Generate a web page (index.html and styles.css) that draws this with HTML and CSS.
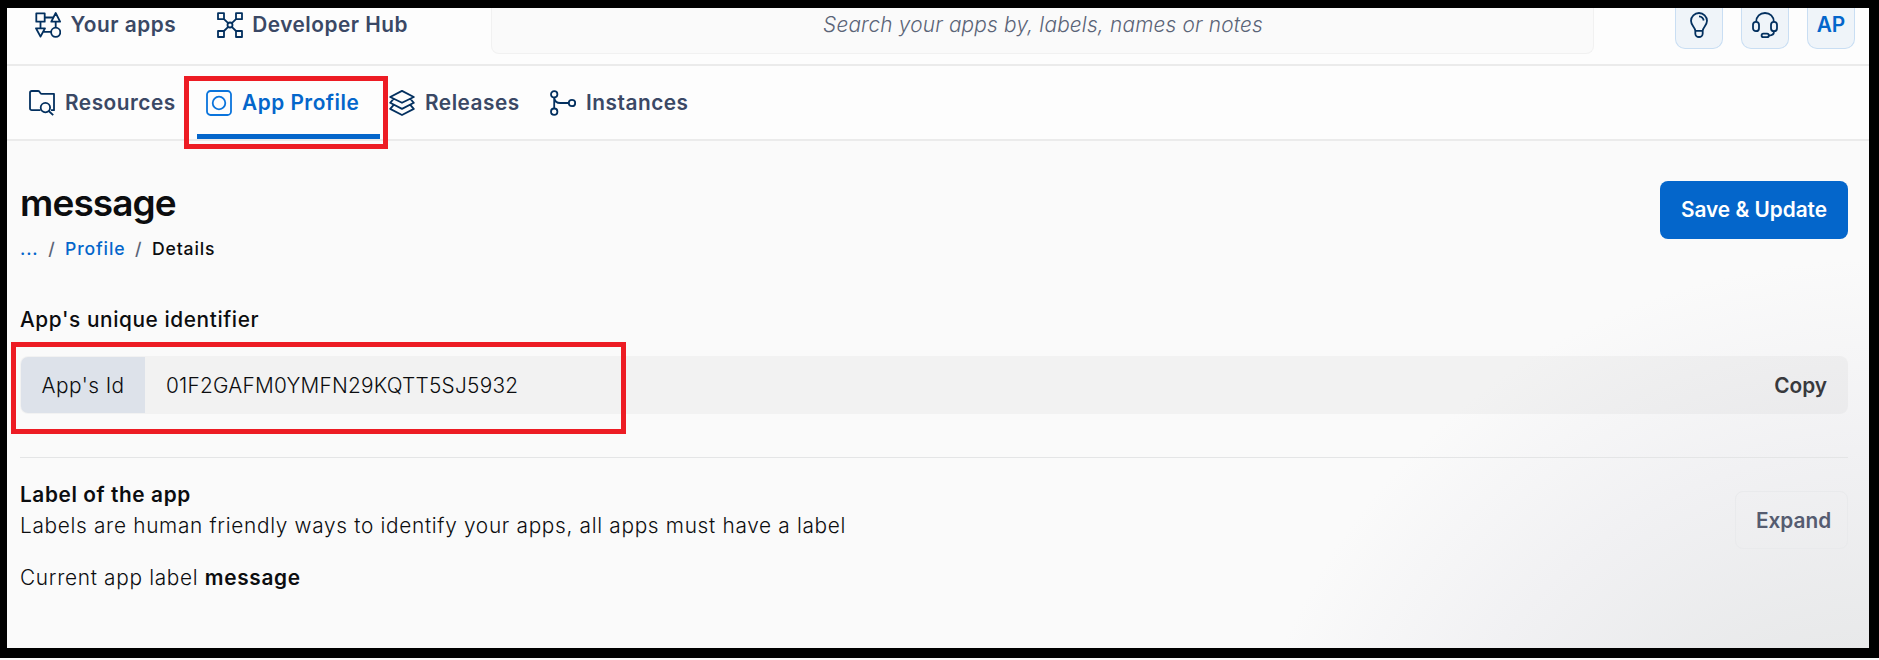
FILE: index.html
```html
<!DOCTYPE html>
<html lang="en">
<head>
<meta charset="utf-8">
<title>App Profile</title>
<link rel="stylesheet" href="styles.css">
</head>
<body>
<div class="frame">
  <header class="topbar">
    <nav class="main-nav">
      <a class="nav-link">
        <svg class="icon" viewBox="0 0 26 26"><path d="M1.3 1.3h8.4v8.4H1.3zM20.7 1l4.4 8.7h-8.8zM1 16.3h9L5.5 24.6z"/><circle cx="20.7" cy="20.3" r="4.6"/><path d="M9.7 5.5h8.6M5.5 9.700v6.600M20.700 9.700v6M8.500 19.800h7.600"/></svg>
        <span>Your apps</span>
      </a>
      <a class="nav-link">
        <svg class="icon" viewBox="0 0 26 26"><path d="M1 1.200h6v6H1zM19 1.200h6v6h-6zM1 19h6v6H1zM19 19h6v6h-6z"/><circle cx="13" cy="13" r="2.500"/><path d="M7 7.200l4.200 4M19 7.200l-4.200 4M7 19l4.200-4.200M19 19l-4.200-4.200"/></svg>
        <span>Developer Hub</span>
      </a>
    </nav>
    <div class="search">Search your apps by, labels, names or notes</div>
    <div class="actions">
      <button class="square"><svg class="icon" viewBox="0 0 26 26"><path d="M9.300 18.800C9 15 5 13.500 5 8.800a8 7.800 0 0 1 16 0c0 4.700-4 6.200-4.300 10zM9.300 18.800v2.700a3.700 3.500 0 0 0 7.400 0v-2.700M13 4.300c2.600.2 4.300 1.800 4.700 4.200"/></svg></button>
      <button class="square"><svg class="icon" viewBox="0 0 26 26"><rect x="1" y="9.800" width="6" height="9.400" rx="3"/><rect x="19" y="9.800" width="6" height="9.400" rx="3"/><path d="M4.200 9.800C4.200 4.300 8 1 13 1s8.800 3.300 8.800 8.800M22 19.200c0 2.600-1.600 4.300-5 4.300"/><rect x="9.600" y="21.700" width="7.200" height="3.400" rx="1.700"/></svg></button>
      <button class="square">AP</button>
    </div>
  </header>

  <nav class="tabs">
    <a class="tab tab-resources">
      <svg class="icon" viewBox="0 0 26 26"><path d="M11.500 20.200H2.800A1.800 1.800 0 0 1 1 18.400V2.700C1 1.700 1.700 1 2.700 1h6.500c.8 0 1.400.6 1.800 1.500.3.800.8 1.300 1.700 1.300H25v16.400h-3"/><circle cx="16.400" cy="17.600" r="4.700"/><path d="M19.700 21l4.500 4.200"/></svg>
      <span>Resources</span>
    </a>
    <a class="tab tab-profile">
      <svg class="icon" viewBox="0 0 26 26"><rect x="1" y="1" width="24" height="24" rx="3.500"/><circle cx="13" cy="13" r="6.300"/></svg>
      <span>App Profile</span>
    </a>
    <a class="tab tab-releases">
      <svg class="icon" viewBox="0 0 26 26"><path d="M13 .9l11.800 6.100L13 12.800 1.200 7zM4.500 9L1.200 12.800 13 18.900l11.800-6.100L21.500 9M4.500 15.200l-3.300 3.700L13 25l11.800-6.100-3.300-3.700"/></svg>
      <span>Releases</span>
    </a>
    <a class="tab tab-instances">
      <svg class="icon" viewBox="0 0 26 26"><circle cx="4.200" cy="4.300" r="3.200"/><circle cx="4.200" cy="21.700" r="3.200"/><circle cx="22" cy="13" r="3.200"/><path d="M4.200 7.500v11M4.200 8c.5 3.200 2.500 5 6 5h8.600"/></svg>
      <span>Instances</span>
    </a>
    <div class="highlight highlight-tab"></div>
  </nav>

  <main class="content">
    <section class="heading">
      <div>
        <h1>message</h1>
        <div class="crumbs"><a>...</a><i>/</i><a>Profile</a><i>/</i><span>Details</span></div>
      </div>
      <button class="save">Save &amp; Update</button>
    </section>

    <h2 class="id-title">App's unique identifier</h2>
    <div class="id-row">
      <div class="id-label">App's Id</div>
      <div class="id-value">01F2GAFM0YMFN29KQTT5SJ5932</div>
      <button class="copy">Copy</button>
      <div class="highlight highlight-id"></div>
    </div>

    <section class="label-section">
      <div>
        <h2>Label of the app</h2>
        <p class="hint">Labels are human friendly ways to identify your apps, all apps must have a label</p>
        <p class="current">Current app label <b>message</b></p>
      </div>
      <button class="expand">Expand</button>
    </section>
  </main>
</div>
</body>
</html>
```
FILE: styles.css
```css
* { box-sizing: border-box; }

body {
  margin: 0;
  height: 660px;
  overflow: hidden;
  background: #fafafa;
  color: #0c0d0f;
  font: 300 20.8px/24px Inter, "Liberation Sans", sans-serif;
}

h1, h2, p { margin: 0; }

button {
  font: 600 20.8px/24px Inter, "Liberation Sans", sans-serif;
  border: 0;
  padding: 0;
}

.frame {
  height: 658px;
  border: solid #000;
  border-width: 8px 10px 10px 7px;
  background: radial-gradient(circle at 1862px 892px, #e3e4e6 0, #e8e9ea 250px, #f1f1f3 450px, #fafafa 640px);
}

.icon {
  width: 26px;
  height: 26px;
  flex: none;
  fill: none;
  stroke: #03305f;
  stroke-width: 1.8;
  stroke-linejoin: round;
}

/* Top bar */
.topbar {
  display: flex;
  align-items: flex-start;
  height: 58px;
  background: #fdfdfd;
  border-bottom: 2px solid #ebebeb;
}

.main-nav {
  display: flex;
  gap: 40.5px;
  width: 484px;
  padding: 4px 0 0 28px;
}

.nav-link, .tab {
  display: flex;
  align-items: center;
  gap: 10px;
  color: #3a4865;
  font-weight: 600;
  letter-spacing: 0.52px;
  white-space: nowrap;
}

.nav-link { gap: 9.5px; }

.search {
  width: 1103px;
  height: 46px;
  padding: 5px 0 0 1px;
  border: 1px solid #f1f1f1;
  border-top: 0;
  border-radius: 0 0 8px 8px;
  background: #fafafa;
  color: #5b6477;
  text-align: center;
  font-style: italic;
  font-weight: 300;
  letter-spacing: 0.2px;
}

.actions {
  display: flex;
  gap: 18px;
  margin-left: 81px;
}

.square {
  display: flex;
  align-items: center;
  justify-content: center;
  width: 48px;
  height: 41px;
  padding-bottom: 6px;
  border: 1px solid #c9def3;
  border-top: 0;
  border-radius: 0 0 10px 10px;
  background: #eff4f9;
  color: #0466cb;
}

/* Tabs */
.tabs {
  position: relative;
  display: flex;
  height: 75px;
  background: #fdfdfd;
  border-bottom: 2px solid #ebebeb;
}

.tab { height: 73px; }
.tab-resources { width: 190px; padding-left: 22px; }
.tab-profile {
  width: 183px;
  padding: 5px 0 0 9px;
  border-bottom: 5px solid #0466cb;
  color: #0466cb;
}
.tab-profile .icon { stroke: #0a74dc; }
.tab-releases { width: 162px; padding-left: 9px; }
.tab-instances { padding-left: 8px; }

/* Red callout rectangles laid over the page */
.highlight {
  position: absolute;
  border: 5px solid #ed1c24;
  pointer-events: none;
}
.highlight-tab { left: 177px; top: 10px; width: 204px; height: 73px; }
.highlight-id { left: -10px; top: -15px; width: 615px; height: 92px; }

/* Content */
.content { padding: 40px 21px 0 13px; }

.heading {
  display: flex;
  justify-content: space-between;
}

h1 {
  font-size: 37px;
  line-height: 44px;
  font-weight: 600;
  letter-spacing: -0.9px;
}

.crumbs {
  display: flex;
  margin-top: 12px;
  font-size: 17.6px;
  line-height: 24px;
  font-weight: 500;
  letter-spacing: 0.85px;
}
.crumbs a { color: #0466cb; }
.crumbs i {
  margin: 0 9.6px;
  color: #5b6477;
  font-style: normal;
}

.save {
  width: 188px;
  height: 58px;
  border-radius: 8px;
  background: #0466cb;
  color: #fff;
}

h2 {
  font-size: 20.8px;
  line-height: 24px;
  font-weight: 600;
  letter-spacing: 0.6px;
}

.id-title {
  margin-top: 47px;
  font-weight: 500;
}

.id-row {
  position: relative;
  display: flex;
  align-items: center;
  height: 58px;
  margin-top: 24px;
  border: 1px solid transparent;
  border-radius: 8px;
  background: rgba(0, 0, 0, 0.033) border-box;
}

.id-label {
  width: 124px;
  padding: 17px 0 15px 20.5px;
  border-radius: 7px 0 0 7px;
  background: #dde2ea;
  letter-spacing: 0.45px;
}

.id-value {
  flex: 1;
  padding: 2px 0 0 21px;
  letter-spacing: 0.25px;
}

.copy {
  margin-right: 20px;
  padding-top: 1px;
  background: none;
  color: #38393d;
}

.label-section {
  display: flex;
  justify-content: space-between;
  margin-top: 43px;
  padding-top: 25px;
  border-top: 1px solid #e4e5e6;
}

.hint { margin-top: 7px; letter-spacing: 0.69px; }
.current { margin-top: 28px; letter-spacing: 0.69px; }
.current b { font-weight: 600; }

.expand {
  width: 113px;
  height: 58px;
  margin-top: 8px;
  padding: 1px 0 0 4px;
  border: 1px solid #e9eaec;
  border-radius: 8px;
  background: none;
  color: #555c70;
}
```
